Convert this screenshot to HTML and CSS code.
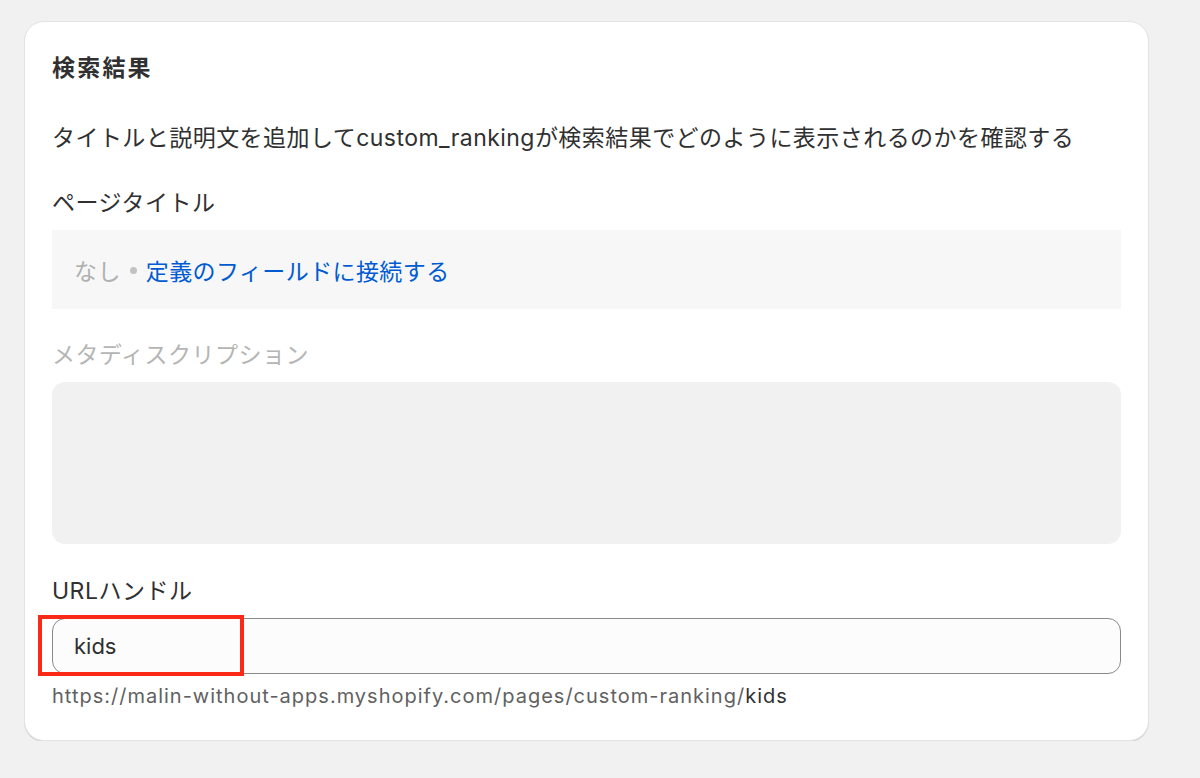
FILE: index.html
```html
<!DOCTYPE html>
<html lang="ja">
<head>
<meta charset="utf-8">
<link rel="stylesheet" href="styles.css">
</head>
<body>
<div class="card">
  <h2 class="title">検索結果</h2>
  <p class="desc">タイトルと説明文を追加してcustom_rankingが検索結果でどのように表示されるのかを確認する</p>
  <div class="label">ページタイトル</div>
  <div class="title-box"><span class="none">なし</span><span class="dot"></span><span class="link">定義のフィールドに接続する</span></div>
  <div class="label label-muted">メタディスクリプション</div>
  <div class="meta-box"></div>
  <div class="label label-url">URLハンドル</div>
  <div class="input-wrap">
    <div class="input">kids</div>
    <div class="highlight"></div>
  </div>
  <div class="url">https://malin-without-apps.myshopify.com/pages/custom-ranking/<span class="url-end">kids</span></div>
</div>
</body>
</html>
```
FILE: styles.css
```css
html, body {
  margin: 0;
  padding: 0;
  background: #f1f1f1;
}
body {
  font-family: "Inter", "Noto Sans CJK JP", sans-serif;
  color: #303030;
  padding: 21px 0 0 24px;
  width: 1125px;
}
.card {
  background: #ffffff;
  border: 1px solid #e3e3e3;
  border-radius: 20px;
  box-shadow: 0 1px 0 #d6d6d6;
  padding: 30px 27px 28px 27px;
  display: flex;
  flex-direction: column;
  height: 660px;
}
.title {
  margin: 0;
  font-size: 23px;
  line-height: 32px;
  font-weight: 700;
  letter-spacing: 2.2px;
}
.desc {
  margin: 38px 0 0 0;
  font-size: 23px;
  line-height: 32px;
  letter-spacing: 0.45px;
  white-space: nowrap;
}
.label {
  margin-top: 33px;
  font-size: 23px;
  line-height: 32px;
  letter-spacing: 0.5px;
}
.label-muted {
  margin-top: 30px;
  color: #b5b5b5;
}
.label-url {
  margin-top: 31px;
}
.title-box {
  margin-top: 11px;
  height: 79px;
  background: #f7f7f7;
  display: flex;
  align-items: center;
  padding-left: 22px;
  font-size: 23px;
  letter-spacing: 0.4px;
}
.none {
  color: #b0b0b0;
}
.dot {
  width: 7px;
  height: 7px;
  border-radius: 50%;
  background: #c2c2c2;
  margin: 2px 9px 0 9px;
}
.link {
  color: #005bd3;
}
.meta-box {
  margin-top: 11px;
  height: 162px;
  background: #f1f1f1;
  border-radius: 13px;
}
.input-wrap {
  margin-top: 11px;
  position: relative;
}
.input {
  height: 54px;
  border: 1px solid #8a8a8a;
  border-radius: 13px;
  background: #fcfcfc;
  display: flex;
  align-items: center;
  padding-left: 21px;
  font-size: 22px;
}
.highlight {
  position: absolute;
  left: -14px;
  top: -3px;
  width: 198px;
  height: 53px;
  border: 4px solid #fa2a16;
}
.url {
  margin-top: 7px;
  font-size: 20px;
  line-height: 30px;
  letter-spacing: 1px;
  color: #616161;
}
.url-end {
  color: #303030;
}
```
